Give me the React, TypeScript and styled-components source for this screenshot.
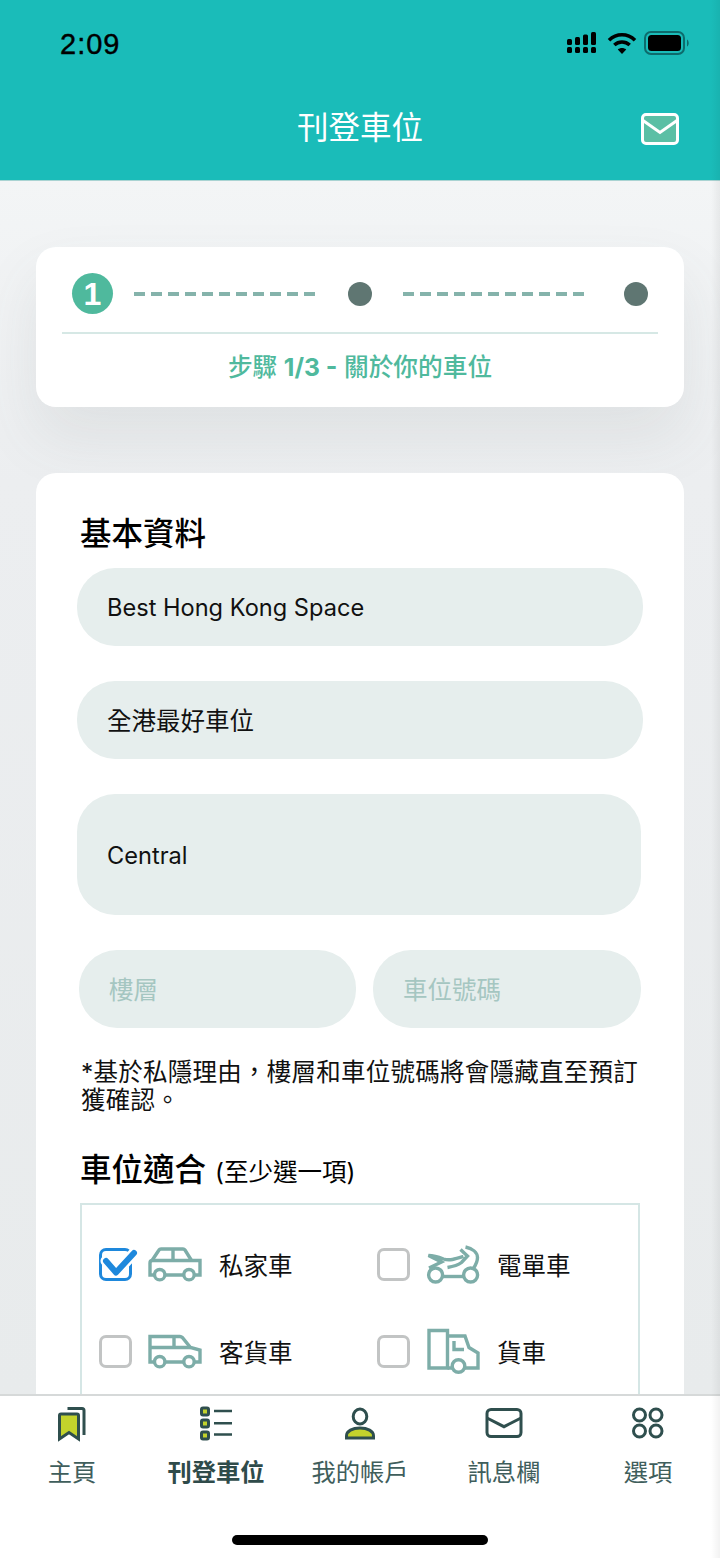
import React from "react";
import styled, { createGlobalStyle } from "styled-components";

const Global = createGlobalStyle`
  html, body { margin: 0; padding: 0; background: #fff; }
  * { box-sizing: border-box; }
  body { font-family: Inter, "Noto Sans CJK TC", sans-serif; }
`;
const CJK = `Inter, "Noto Sans CJK TC", sans-serif`;

const Phone = styled.div`
  width: 720px; height: 1558px; display: flex; flex-direction: column; overflow: hidden; position: relative;
`;
const EdgeShade = styled.div`
  position: absolute; top: 0; right: 0; bottom: 0; width: 9px; pointer-events: none;
  background: linear-gradient(90deg, rgba(0,0,0,0), rgba(0,0,0,0.05));
`;
const Header = styled.header`
  height: 181px; flex: none; background: #1abcb9; border-bottom: 1px solid #a9d3d2;
  display: flex; flex-direction: column;
`;
const StatusBar = styled.div`
  height: 74px; flex: none; display: flex; align-items: flex-end; justify-content: space-between; padding: 0 30px 14px 60px;
`;
const Time = styled.span`
  font: 500 29px/32px "Liberation Sans", Arial, sans-serif; color: #000; -webkit-text-stroke: 0.4px #000; letter-spacing: 1px;
`;
const StatusIcons = styled.div`
  display: flex; align-items: center; gap: 7px; margin-bottom: 5px;
  svg:first-child { margin-right: 3px; }
`;
const TitleRow = styled.div`
  flex: 1; display: flex; align-items: center; justify-content: center; position: relative; padding-top: 1px;
`;
const Title = styled.h1`
  margin: 0; font: 400 31.5px/44px ${CJK}; color: #fff;
`;
const MailButton = styled.div`
  position: absolute; left: 641px; top: 39px; width: 38px; height: 32px; display: flex;
`;
const Main = styled.main`
  flex: 1; min-height: 0; overflow: hidden; padding: 66px 36px 0;
  display: flex; flex-direction: column; gap: 66px;
  background: linear-gradient(180deg, #f3f5f6 0, #eceef0 300px, #e8ebec 100%);
`;
const Card = styled.section`
  background: #fff; border-radius: 20px; flex: none;
`;
const StepCard = styled(Card)`
  height: 160px; padding: 26px 26px 0; box-shadow: 0 30px 60px rgba(90,100,100,0.10);
`;
const Stepper = styled.div`
  display: flex; align-items: center; height: 41px; padding-left: 10px;
`;
const StepActive = styled.div`
  width: 41px; height: 41px; border-radius: 50%; background: #4fb99d; color: #fff; flex: none;
  display: flex; align-items: center; justify-content: center; font: 700 32px/1 "Liberation Sans", sans-serif;
`;
const StepDot = styled.div`
  width: 24px; height: 24px; border-radius: 50%; background: #5f7672; flex: none;
`;
const Dash = styled.div<{ $l: number; $r: number }>`
  height: 4px; flex: none; width: 181px; margin: 0 ${p => p.$r}px 0 ${p => p.$l}px;
  background: repeating-linear-gradient(90deg, #85b3ab 0 11px, transparent 11px 17px);
`;
const StepDivider = styled.div`
  height: 2px; background: #d6e8e5; margin-top: 18px;
`;
const StepLabel = styled.div`
  text-align: center; margin-top: 15px; color: #4fb99d; font: 500 24.7px/36px ${CJK};
  b { font-weight: 700; }
`;
const FormCard = styled(Card)`
  padding: 38px 41px 40px; flex: 1; border-radius: 20px 20px 0 0;
`;
const SectionTitle = styled.h2`
  margin: 0; font: 500 31.5px/46px ${CJK}; color: #000; padding-left: 3px;
  small { font-size: 24.5px; font-weight: 400; margin-left: 9px; }
`;
const Field = styled.div<{ $h?: number; $ph?: boolean; $w?: number; $latin?: boolean }>`
  height: ${p => p.$h ?? 78}px; width: ${p => p.$w ?? 566}px; flex: none;
  border-radius: 38px; background: #e6eeed; display: flex; align-items: center;
  padding: 2px 0 0 30px;
  font: 400 ${p => (p.$latin ? 23.6 : 24.5)}px/32px ${CJK}; color: ${p => (p.$ph ? "#a5c6c1" : "#111")};
`;
const Stack = styled.div`
  display: flex; flex-direction: column; gap: 35px; margin-top: 11px;
`;
const FieldRow = styled.div`
  display: flex; gap: 17px; padding-left: 2px;
`;
const Note = styled.p`
  margin: 30px 0 0 4px; width: 564px; font: 400 24.5px/28px ${CJK}; color: #111; letter-spacing: 0.25px;
`;
const SubTitle = styled(SectionTitle)`
  margin-top: 33px;
`;
const OptionBox = styled.div`
  margin: 8px 0 0 3px; width: 560px; border: 2px solid #d5e6e5; padding: 43px 17px 0; height: 240px;
  display: grid; grid-template-columns: 278px 1fr; grid-auto-rows: 87px;
`;
const Option = styled.div`
  display: flex; align-items: flex-start; height: 34px;
`;
const Check = styled.div<{ $on?: boolean }>`
  width: 33px; height: 33px; border-radius: 7px; flex: none; position: relative;
  border: 3px solid ${p => (p.$on ? "#1e88dc" : "#c2c4c4")}; background: #fff;
`;
const Tick = styled.svg`
  position: absolute; left: 0; top: 0; width: 36px; height: 27px; overflow: visible;
`;
const VehicleSvg = styled.svg`
  width: 54px; height: 44px; margin: -6px 17px 0 16px; flex: none; overflow: visible;
  fill: none; stroke: #7dada8; stroke-width: 3.4;
`;
const OptionLabel = styled.span`
  font: 400 24.5px/34px ${CJK}; color: #111; margin-top: 1px;
`;
const Nav = styled.nav`
  height: 164px; flex: none; background: #fff; border-top: 2px solid #d6d9d9; position: relative;
  display: grid; grid-template-columns: repeat(5, 144px); padding-top: 7px;
`;
const NavItem = styled.div<{ $active?: boolean }>`
  display: flex; flex-direction: column; align-items: center;
  font: ${p => (p.$active ? 700 : 400)} 24.3px/36px ${CJK}; color: ${p => (p.$active ? "#2f4b4a" : "#3f5e5c")};
`;
const NavIcon = styled.svg`
  width: 40px; height: 40px; margin-bottom: 11px; fill: none; stroke: #2f4f4e; stroke-width: 3;
`;
const HomeBar = styled.div`
  position: absolute; left: 232px; top: 139px; width: 256px; height: 10px; border-radius: 5px; background: #000;
`;

const Signal = () => (
  <svg width="30" height="22" viewBox="0 0 30 22" fill="#000">
    <rect x="0" y="7" width="5" height="6" rx="1.5" /><rect x="8" y="5" width="5" height="8" rx="1.5" />
    <rect x="16" y="2.5" width="5" height="10.5" rx="1.5" /><rect x="24" y="0" width="5" height="13" rx="1.5" />
    <rect x="0" y="15" width="5" height="6" rx="1.5" /><rect x="8" y="15" width="5" height="6" rx="1.5" />
    <rect x="16" y="15" width="5" height="6" rx="1.5" /><rect x="24" y="15" width="5" height="6" rx="1.5" />
  </svg>
);
const Wifi = () => (
  <svg width="30" height="22" viewBox="0 0 30 22" fill="none" stroke="#000" strokeWidth="3.6">
    <path d="M2 8.2C9.5 1 20.5 1 28 8.2" /><path d="M7.3 13C11.8 9 18.2 9 22.7 13" />
    <path d="M15 22l-4.2-4.6c2.4-2 6-2 8.4 0z" fill="#000" stroke="none" />
  </svg>
);
const Battery = () => (
  <svg width="46" height="24" viewBox="0 0 46 24">
    <rect x="1" y="1" width="39" height="22" rx="6" fill="none" stroke="#0d6b6c" strokeWidth="2" />
    <rect x="4" y="4" width="33" height="16" rx="3.5" fill="#000" />
    <path d="M43 8.5c2 .8 2.5 6 0 7z" fill="#0d6b6c" />
  </svg>
);
const Mail = () => (
  <svg width="38" height="32" viewBox="0 0 38 32">
    <rect x="1.5" y="1.5" width="35" height="29" rx="3.5" fill="#5bbfa5" stroke="#fff" strokeWidth="3" />
    <path d="M2 7.500l17 12 17-12" fill="none" stroke="#fff" strokeWidth="3" />
  </svg>
);
const Car = () => (
  <VehicleSvg viewBox="0 0 54 44">
    <path d="M6 33H2V21c0-1.500 1-2.500 2.500-2.500h47.500V33h-5" />
    <path d="M4 18.500L11 8c.5-.8 1.200-1 2-1h22c.8 0 1.500.3 2 1l6.500 10.500" />
    <path d="M17 33h18M25 7v11.500" />
    <circle cx="11.700" cy="32.700" r="5.200" /><circle cx="41" cy="32.700" r="5.200" />
  </VehicleSvg>
);
const Van = () => (
  <VehicleSvg viewBox="0 0 54 44">
    <path d="M6 33H2V7.500h30c1 0 1.700.4 2.300 1L42.500 18.500l9.500 2.500V33h-5" />
    <path d="M2 18.500h40.500M26 7.500v11M17 33h18" />
    <circle cx="11.700" cy="32.700" r="5.200" /><circle cx="41" cy="32.700" r="5.200" />
  </VehicleSvg>
);
const Moto = () => (
  <VehicleSvg viewBox="0 0 54 44">
    <path d="M16.500 34.500h21" />
    <circle cx="9.600" cy="33" r="7" /><circle cx="44.600" cy="33" r="7" />
    <path d="M3 26l12.500-6L2.500 13.500c5 0 10 1.500 15 3.500 6 2 12 0 20-2.500" />
    <path d="M34.500 7.500l7 6.500-6 6.500c-4 3-8 4-14 5" />
    <path d="M39.500 5c7 1.500 12 5.500 12 10.500 0 4-2 8-4.500 11.500" />
  </VehicleSvg>
);
const Truck = () => (
  <VehicleSvg viewBox="0 0 54 44">
    <path d="M3 1.500h18.500v37.500H3z" />
    <path d="M21.500 7H39l4 11.500 9 5.500v15h-13M21.500 39H26" />
    <path d="M28 12v8.500h10" />
    <circle cx="32.500" cy="37" r="6.300" />
  </VehicleSvg>
);
const CheckTick = () => (
  <Tick viewBox="0 0 36 27">
    <path d="M4 10l10 11.500L32 2" fill="none" stroke="#fff" strokeWidth="11" strokeLinecap="round" strokeLinejoin="round" />
    <path d="M4 10l10 11.500L32 2" fill="none" stroke="#1e88dc" strokeWidth="6" strokeLinecap="round" strokeLinejoin="round" />
  </Tick>
);

export default function App() {
  return (
    <Phone>
      <Global />
      <Header>
        <StatusBar>
          <Time>2:09</Time>
          <StatusIcons><Signal /><Wifi /><Battery /></StatusIcons>
        </StatusBar>
        <TitleRow>
          <Title>刊登車位</Title>
          <MailButton><Mail /></MailButton>
        </TitleRow>
      </Header>
      <Main>
        <StepCard>
          <Stepper>
            <StepActive>1</StepActive>
            <Dash $l={21} $r={33} />
            <StepDot />
            <Dash $l={31} $r={40} />
            <StepDot />
          </Stepper>
          <StepDivider />
          <StepLabel>步驟 <b>1/3 -</b> 關於你的車位</StepLabel>
        </StepCard>
        <FormCard>
          <SectionTitle>基本資料</SectionTitle>
          <Stack>
            <Field $latin>Best Hong Kong Space</Field>
            <Field>全港最好車位</Field>
            <Field $latin $h={121} $w={564}>Central</Field>
            <FieldRow>
              <Field $ph $w={277}>樓層</Field>
              <Field $ph $w={268}>車位號碼</Field>
            </FieldRow>
          </Stack>
          <Note>*基於私隱理由，樓層和車位號碼將會隱藏直至預訂獲確認。</Note>
          <SubTitle>車位適合<small>(至少選一項)</small></SubTitle>
          <OptionBox>
            <Option><Check $on><CheckTick /></Check><Car /><OptionLabel>私家車</OptionLabel></Option>
            <Option><Check /><Moto /><OptionLabel>電單車</OptionLabel></Option>
            <Option><Check /><Van /><OptionLabel>客貨車</OptionLabel></Option>
            <Option><Check /><Truck /><OptionLabel>貨車</OptionLabel></Option>
          </OptionBox>
        </FormCard>
      </Main>
      <Nav>
        <NavItem>
          <NavIcon viewBox="0 0 40 40">
            <path d="M7.500 36V12.500c0-.8.7-1.500 1.500-1.500h16c.8 0 1.500.7 1.500 1.500V36L17 29.500z" fill="#c3d32c" />
            <path d="M15.500 5.500H30c1.200 0 2 .8 2 2V32" />
          </NavIcon>
          主頁
        </NavItem>
        <NavItem $active>
          <NavIcon viewBox="0 0 40 40">
            <rect x="5.500" y="5" width="7" height="7" rx="1.500" fill="#c3d32c" />
            <rect x="5.500" y="17" width="7" height="7" rx="1.500" fill="#c3d32c" />
            <rect x="5.500" y="29" width="7" height="7" rx="1.500" fill="#c3d32c" />
            <path d="M18 8h18M18 20.300h18M18 31.500h18" strokeWidth="2.600" />
          </NavIcon>
          刊登車位
        </NavItem>
        <NavItem>
          <NavIcon viewBox="0 0 40 40">
            <ellipse cx="20" cy="13.500" rx="6.800" ry="7.500" />
            <path d="M6.500 35v-2c0-5 6-8 13.500-8s13.500 3 13.500 8v2z" fill="#c3d32c" />
          </NavIcon>
          我的帳戶
        </NavItem>
        <NavItem>
          <NavIcon viewBox="0 0 40 40">
            <rect x="3" y="6.500" width="34" height="27" rx="4" />
            <path d="M3 15l17 8.700L37 15" />
          </NavIcon>
          訊息欄
        </NavItem>
        <NavItem>
          <NavIcon viewBox="0 0 40 40">
            <circle cx="11.500" cy="12" r="6" /><circle cx="28" cy="12" r="6" />
            <circle cx="11.500" cy="28" r="6" /><circle cx="28" cy="28" r="6" />
          </NavIcon>
          選項
        </NavItem>
        <HomeBar />
      </Nav>
      <EdgeShade />
    </Phone>
  );
}
